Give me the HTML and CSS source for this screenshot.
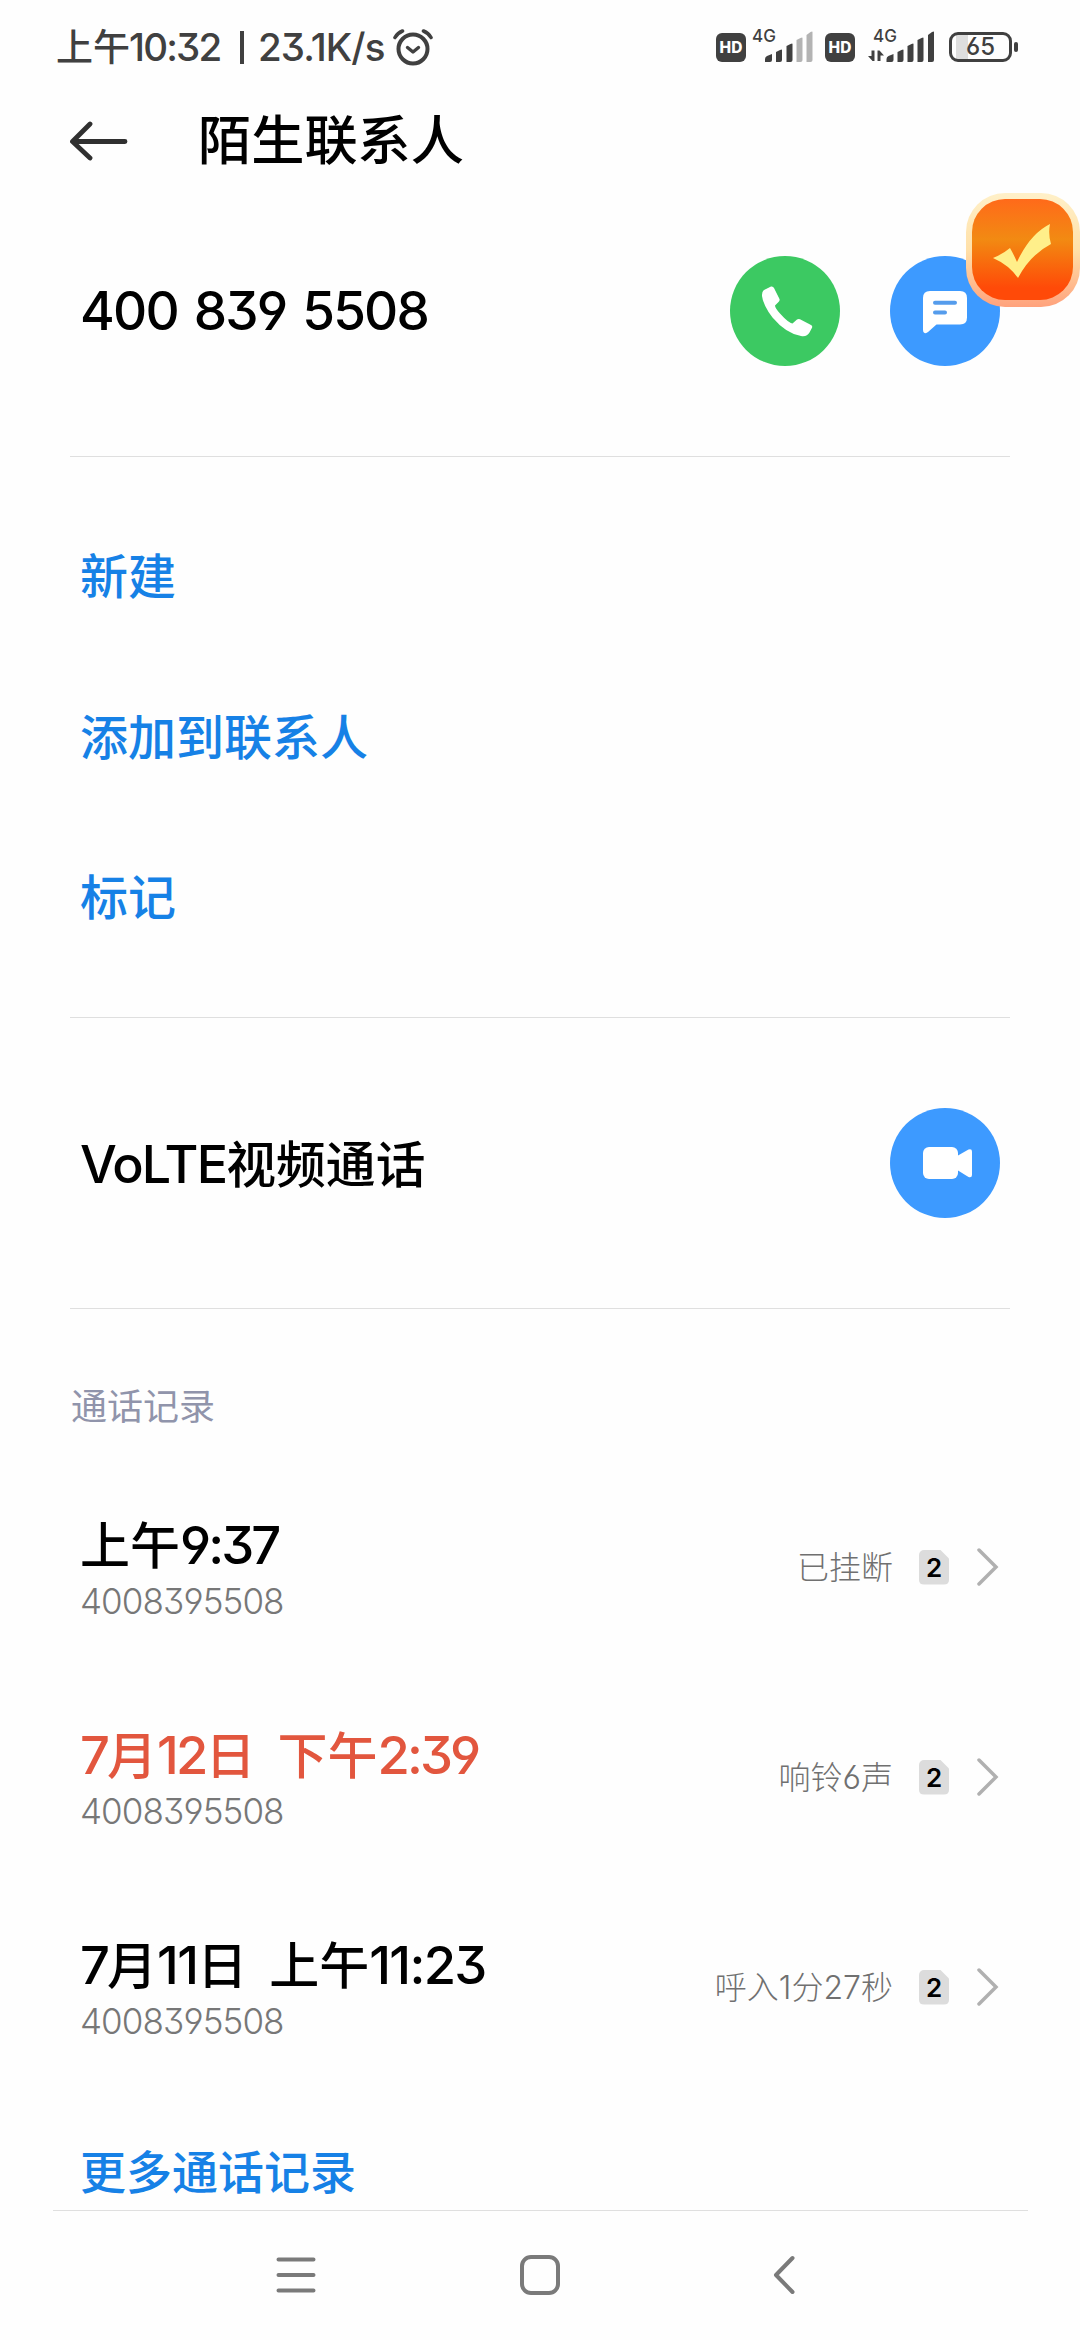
FILE: index.html
```html
<!DOCTYPE html>
<html lang="zh-CN">
<head>
    <meta charset="UTF-8">
    <meta name="viewport" content="width=device-width, initial-scale=1.0">
    <title>陌生联系人</title>
    <link rel="stylesheet" href="styles.css">
</head>
<body>
    <!-- Barra de estado -->
    <div class="status-bar">
        <div class="status-text">
            <span class="status-cjk">上午</span>
            <span class="clock">10:32</span>
            <i class="status-sep"></i>
            <span class="speed">23.1K/s</span>
        </div>
        <svg class="alarm" width="40" height="38" viewBox="0 0 40 38" fill="none" stroke="#404040" stroke-linecap="round">
            <circle cx="20" cy="21" r="14.5" stroke-width="4"/>
            <path d="M14.5 19.5l5.5 4.5 5.5-4.5" stroke-width="3.4" stroke-linejoin="round"/>
            <path d="M2 9.5Q4.500 5 9.500 3M30.500 3Q35.500 5 38 9.500" stroke-width="3.600"/>
        </svg>
        <div class="status-icons">
            <span class="hd">HD</span>
            <svg class="signal first" width="60" height="36" viewBox="0 0 60 36">
                <text x="-1" y="14">4G</text>
                <g fill="#404040">
                    <path d="M12 34v-3q0-2 2-3l5-2v6q0 2-2 2z"/>
                    <path d="M23 34V24l4-2q2-1 2 0v10q0 2-2 2z"/>
                    <path d="M33.500 34V18l4-2q2-1 2 0v16q0 2-2 2z"/>
                </g>
                <g fill="#b3b3b3">
                    <path d="M43.500 34V12l4-2q2-1 2 0v22q0 2-2 2z"/>
                    <path d="M53.500 34V7l4-3q2-1 2 0v28q0 2-2 2z"/>
                </g>
            </svg>
            <span class="hd">HD</span>
            <svg class="signal second" width="68" height="36" viewBox="0 0 68 36">
                <text x="5" y="14">4G</text>
                <path fill="#404040" d="M3.500 22.500h3V33H4.500L0 28h3.500zM9.500 33V22.500h2l4.500 5h-3.500V33z"/>
                <g fill="#404040">
                    <path d="M18.500 34v-3q0-2 2-3l5-2v6q0 2-2 2z"/>
                    <path d="M29.500 34V24l4-2q2-1 2 0v10q0 2-2 2z"/>
                    <path d="M39.500 34V18l4-2q2-1 2 0v16q0 2-2 2z"/>
                    <path d="M49.500 34V12l4-2q2-1 2 0v22q0 2-2 2z"/>
                    <path d="M60 34V7l4-3q2-1 2 0v28q0 2-2 2z"/>
                </g>
            </svg>
            <div class="battery">65</div>
        </div>
    </div>

    <header class="header">
        <svg width="60" height="42" viewBox="0 0 60 42" fill="none" stroke="#303030" stroke-width="4.800" stroke-linecap="round" stroke-linejoin="round">
            <path d="M20 4L2.500 21.500 20 38M3 21.500H55"/>
        </svg>
        <h1>陌生联系人</h1>
    </header>

    <main>
        <section class="row number">
            <span class="phone">400 839 5508</span>
            <div class="actions">
                <button class="circle green">
                    <svg width="110" height="110" viewBox="0 0 110 110" fill="#fff">
                        <path d="M34 34L41 30.500Q43 30 44 32L49.500 43Q50 44.500 48.500 46L45 49.500Q45 52 50 57.500Q58 66.500 62.500 67.500L67 63.500Q68.500 62.500 70 63.200L81 69Q82.800 70 82 71.800L79.500 76.500Q77 81 71 80Q56 77.500 42.500 61.500Q33.500 50 32 40Q31.700 35.500 34 34Z"/>
                    </svg>
                </button>
                <button class="circle blue">
                    <svg width="110" height="110" viewBox="0 0 110 110">
                        <path fill="#fff" d="M40 35H70Q77 35 77 42V61.500Q77 68.500 70 68.500H46.500L38 76Q36.500 77.500 34.500 77Q33 76.500 33 74V42Q33 35 40 35Z"/>
                        <path stroke="#559cec" stroke-width="4" stroke-linecap="round" d="M45 46.800H65M45 56.500H55"/>
                    </svg>
                </button>
            </div>
            <div class="float-badge">
                <svg width="101" height="101" viewBox="0 0 101 101">
                    <path fill="#ffef8a" d="M21 59Q31 55 38 49Q42 56 45 63Q58 35 78 25Q76 35 79 45Q58 56 46 79Q37 66 21 59Z"/>
                </svg>
            </div>
        </section>

        <section class="links">
            <a>新建</a>
            <a>添加到联系人</a>
            <a>标记</a>
        </section>

        <section class="row volte">
            <span class="volte-text"><b>VoLTE</b>视频通话</span>
            <button class="circle blue">
                <svg width="110" height="110" viewBox="0 0 110 110" fill="#fff">
                    <rect x="33" y="39" width="35" height="32" rx="6"/>
                    <path d="M68 47.500L78.500 41.500Q82 40.500 82 43.500V67Q82 70 78.500 69L68 62.500Z"/>
                </svg>
            </button>
        </section>

        <section class="records">
            <h2>通话记录</h2>
            <div class="record">
                <div class="record-info">
                    <div class="time">上午<b>9:37</b></div>
                    <div class="sub">4008395508</div>
                </div>
                <span class="state">已挂断</span>
                <span class="sim">2</span>
                <svg class="chevron" width="22" height="40" viewBox="0 0 22 40"><path d="M2 3L19 20 2 37"/></svg>
            </div>
            <div class="record missed">
                <div class="record-info">
                    <div class="time"><b>7</b>月<b>12</b>日<i></i>下午<b>2:39</b></div>
                    <div class="sub">4008395508</div>
                </div>
                <span class="state">响铃<b>6</b>声</span>
                <span class="sim">2</span>
                <svg class="chevron" width="22" height="40" viewBox="0 0 22 40"><path d="M2 3L19 20 2 37"/></svg>
            </div>
            <div class="record">
                <div class="record-info">
                    <div class="time"><b>7</b>月<b class="ones">11</b>日<i></i>上午<b class="ones">11:23</b></div>
                    <div class="sub">4008395508</div>
                </div>
                <span class="state">呼入<b>1</b>分<b>27</b>秒</span>
                <span class="sim">2</span>
                <svg class="chevron" width="22" height="40" viewBox="0 0 22 40"><path d="M2 3L19 20 2 37"/></svg>
            </div>
            <a class="more">更多通话记录</a>
        </section>
    </main>

    <!-- Barra de navegación -->
    <nav class="nav-bar">
        <svg width="40" height="44" viewBox="0 0 40 44"><path d="M2.500 6.500H37.500M2.500 22H37.500M2.500 37.500H37.500"/></svg>
        <svg width="40" height="44" viewBox="0 0 40 44"><rect x="2" y="4" width="36" height="36" rx="9"/></svg>
        <svg width="40" height="44" viewBox="0 0 40 44"><path d="M28.500 5L12 22 28.500 39"/></svg>
    </nav>
</body>
</html>
```
FILE: styles.css
```css
* {
    box-sizing: border-box;
}

body {
    margin: 0;
    width: 1080px;
    height: 2340px;
    overflow: hidden;
    display: flex;
    flex-direction: column;
    background-color: #fefefe;
    color: #000;
    font-family: Inter, "Noto Sans CJK SC", sans-serif;
    font-weight: 500;
    font-feature-settings: "cv03", "cv04", "cv09";
}

h1, h2, b, i {
    margin: 0;
    font-weight: inherit;
    font-style: normal;
}

svg {
    display: block;
    flex-shrink: 0;
}

/* Barra de estado */
.status-bar {
    height: 94px;
    padding: 0 61px 0 56px;
    display: flex;
    align-items: center;
    color: #404040;
}

.status-text {
    width: 331px;
    font-size: 38.5px;
    display: flex;
    align-items: center;
    white-space: nowrap;
}

.status-cjk {
    width: 73px;
    padding-bottom: 5px;
    font-size: 37px;
}

.clock {
    width: 95px;
    letter-spacing: -1.8px;
}

.speed {
    letter-spacing: -0.9px;
}

.status-sep {
    flex-shrink: 0;
    width: 4px;
    height: 33px;
    margin: 0 14px 0 16px;
    background-color: #404040;
}

.alarm {
    margin-left: 6px;
}

.status-icons {
    margin-left: auto;
    display: flex;
    align-items: center;
}

.hd {
    width: 30px;
    height: 29px;
    border-radius: 6px;
    background-color: #404040;
    color: #fff;
    font-size: 15.5px;
    font-weight: 800;
    line-height: 29px;
    text-align: center;
}

.signal {
    overflow: visible;
}

.signal text {
    font-size: 17px;
    font-weight: 500;
    fill: #404040;
}

.signal.first {
    margin: -2px 12px 0 7px;
}

.signal.second {
    margin: -2px 13px 0 13px;
}

.battery {
    position: relative;
    width: 63px;
    height: 30px;
    margin-right: 7px;
    border: 3.5px solid #404040;
    border-radius: 9px;
    font-size: 24px;
    line-height: 23px;
    text-align: center;
    background: linear-gradient(to right, #fefefe 4px, #dedede 4px, #dedede 16px, #fefefe 16px);
}

.battery::after {
    content: "";
    position: absolute;
    right: -9px;
    top: 7px;
    width: 4px;
    height: 10px;
    border-radius: 2px;
    background-color: #404040;
}

/* Cabecera */
.header {
    height: 94px;
    padding-left: 70px;
    display: flex;
    align-items: center;
}

.header h1 {
    margin-left: 68px;
    font-size: 53.2px;
    line-height: 94px;
}

/* Secciones */
main {
    height: 2022px;
    overflow: hidden;
}

.row,
.links {
    margin: 0 70px;
    border-bottom: 1px solid #dfdfdf;
}

.row {
    position: relative;
    padding: 0 10px;
    display: flex;
    justify-content: space-between;
    align-items: center;
}

.number {
    height: 269px;
    padding-bottom: 22px;
}

.phone {
    font-size: 53px;
    letter-spacing: -1.8px;
    word-spacing: 3.5px;
    white-space: nowrap;
}

.actions {
    display: flex;
    gap: 50px;
}

.circle {
    width: 110px;
    height: 110px;
    padding: 0;
    border: none;
    border-radius: 50%;
}

.green {
    background-color: #3cc962;
}

.blue {
    background-color: #3d9aff;
}

.float-badge {
    position: absolute;
    left: 896px;
    top: 5px;
    width: 114px;
    height: 114px;
    padding: 6px;
    border-radius: 39px;
    background: linear-gradient(#fff0c8, #ffe0a8 50%, #ffa27c);
}

.float-badge svg {
    border-radius: 33px;
    background: linear-gradient(#ff6a1a, #f28a12 40%, #ff4a08 88%);
}

.links {
    height: 561px;
    padding: 40px 10px 0;
}

.links a {
    display: block;
    height: 160.5px;
    line-height: 160.5px;
    font-size: 48px;
    color: #1681e6;
}

.volte {
    height: 291px;
}

.volte-text {
    padding-bottom: 5px;
    font-size: 49.8px;
}

.volte-text b {
    font-size: 52px;
    letter-spacing: -1.8px;
}

/* Registro de llamadas */
.records h2 {
    height: 153px;
    padding: 45px 0 0 71px;
    font-size: 36px;
    font-weight: 400;
    line-height: 106px;
    color: #9094ab;
}

.record {
    height: 210px;
    padding: 0 81px 0 80px;
    display: flex;
    align-items: center;
}

.record-info {
    flex: 1;
    padding-top: 7px;
}

.time {
    height: 60px;
    line-height: 60px;
    font-size: 50px;
    white-space: nowrap;
}

.time b {
    font-size: 52.5px;
    letter-spacing: -2.9px;
}

.time .ones {
    letter-spacing: -1.7px;
}

.time i {
    display: inline-block;
    width: 22px;
}

.missed .time {
    color: #e2563e;
}

.sub {
    height: 52px;
    line-height: 52px;
    font-size: 35px;
    font-weight: 300;
    letter-spacing: -0.9px;
    color: #777;
}

.state {
    padding-bottom: 4px;
    font-size: 32px;
    font-weight: 300;
    color: #707070;
}

.sim {
    width: 30px;
    height: 35px;
    margin: 0 28px 0 26px;
    border-radius: 5px;
    background-color: #dcdcdc;
    clip-path: polygon(0 0, 70% 0, 100% 26%, 100% 100%, 0 100%);
    font-size: 26px;
    font-weight: 600;
    line-height: 36px;
    text-align: center;
}

.chevron {
    fill: none;
    stroke: #b0b0b0;
    stroke-width: 3.5;
    stroke-linecap: round;
}

.more {
    display: block;
    padding-left: 80px;
    font-size: 46px;
    line-height: 160px;
    color: #1681e6;
}

/* Barra de navegación */
.nav-bar {
    position: relative;
    height: 130px;
    padding: 0 276px;
    display: flex;
    justify-content: space-between;
    align-items: center;
}

.nav-bar::before {
    content: "";
    position: absolute;
    left: 53px;
    right: 52px;
    top: 0;
    height: 1px;
    background-color: #dfdfdf;
}

.nav-bar svg {
    fill: none;
    stroke: #7a7a7a;
    stroke-width: 4;
    stroke-linecap: round;
    stroke-linejoin: round;
}
```
